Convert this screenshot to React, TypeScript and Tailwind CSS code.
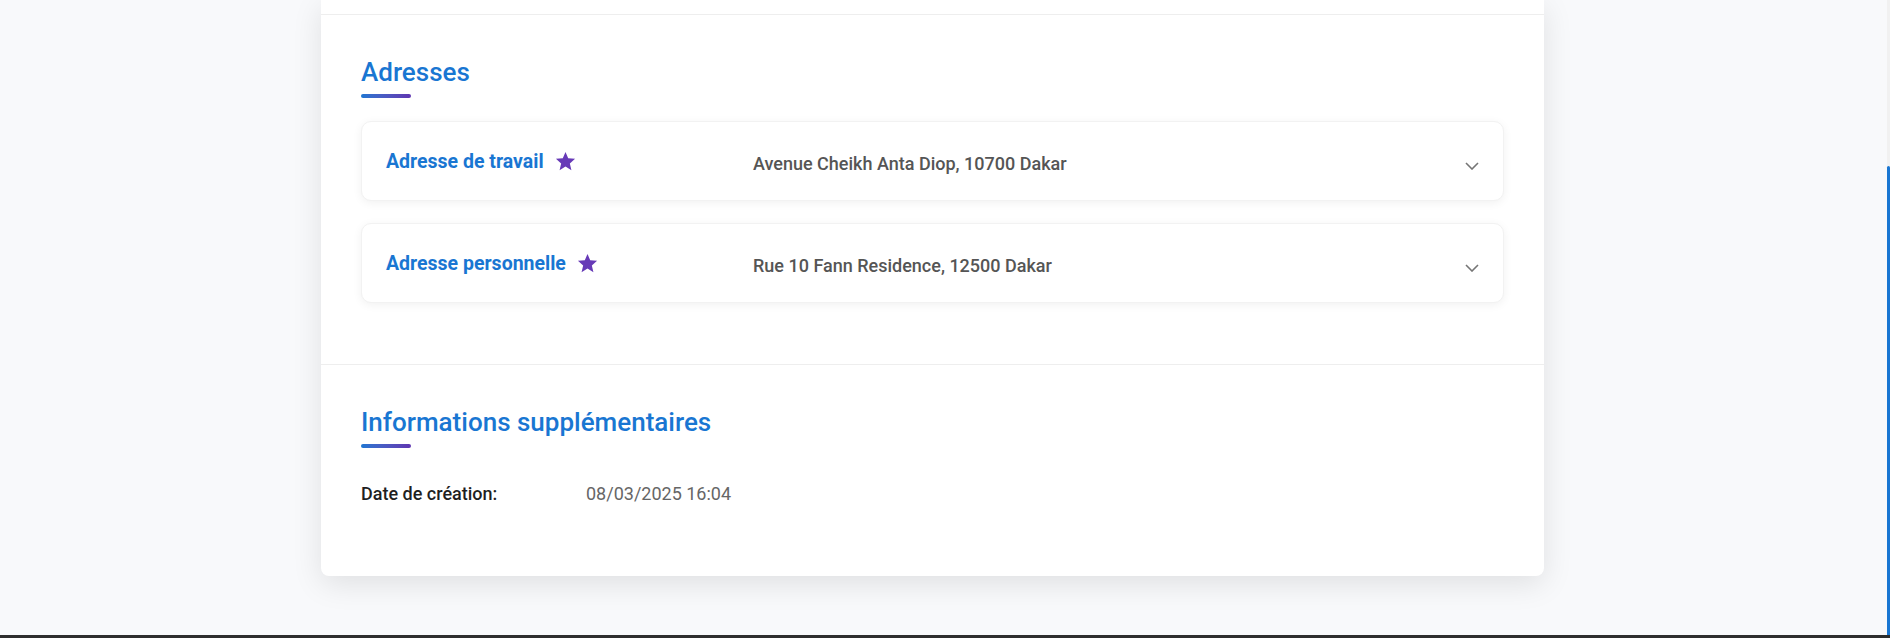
import { ReactNode } from "react";

const addresses = [
  { label: "Adresse de travail", value: "Avenue Cheikh Anta Diop, 10700 Dakar" },
  { label: "Adresse personnelle", value: "Rue 10 Fann Residence, 12500 Dakar" },
];

const StarIcon = ({ className }: { className?: string }) => (
  <svg viewBox="0 0 24 24" className={className} fill="currentColor">
    <path d="M12 17.27 18.18 21l-1.64-7.03L22 9.24l-7.19-.61L12 2 9.19 8.63 2 9.24l5.46 4.73L5.82 21z" />
  </svg>
);

const Chevron = () => (
  <svg width="14" height="8" viewBox="0 0 14 8" fill="none" className="mr-6 mt-[9px] shrink-0">
    <polyline points="1,1 7,7 13,1" stroke="#757575" strokeWidth="1.6" />
  </svg>
);

const SectionTitle = ({ children }: { children: ReactNode }) => (
  <div className="flex flex-col">
    <h2 className="text-[26px] leading-[32px] font-medium text-[#1976d2]">{children}</h2>
    {/* gradient underline */}
    <div className="mt-1.5 h-1 w-[50px] rounded-full bg-linear-to-r from-[#1976d2] to-[#5e35b1]" />
  </div>
);

const AddressCard = ({ label, value }: { label: string; value: string }) => (
  <div className="flex h-20 items-center rounded-[10px] border border-[#f2f2f2] bg-white pl-6 shadow-[0_2px_10px_rgba(0,0,0,0.06)]">
    <div className="flex w-[367px] shrink-0 items-center">
      <span className="text-[19.5px] leading-[27px] font-bold text-[#1976d2]">{label}</span>
      <StarIcon className="ml-2.5 h-[23px] w-[23px] text-[#673ab7]" />
    </div>
    <span className="mt-1 flex-1 text-[18px] leading-[27px] font-medium text-[#555]">{value}</span>
    <Chevron />
  </div>
);

export default function App() {
  return (
    <div className="flex h-[638px] w-full flex-col overflow-hidden bg-[#f8f9fb] font-['Roboto',sans-serif]">
      <div className="flex flex-1">
        <div className="flex-1">
          <div className="ml-[321px] w-[1223px] rounded-b-lg bg-white shadow-[0_8px_30px_rgba(0,0,0,0.1)]">
            {/* tail of previous section */}
            <div className="h-[15px] border-b border-[#eeeeee]" />

            {/* Adresses */}
            <section className="border-b border-[#eeeeee] px-10 pt-[41px] pb-[61px]">
              <SectionTitle>Adresses</SectionTitle>
              <div className="mt-[23px] flex flex-col gap-[22px]">
                {addresses.map((a) => (
                  <AddressCard key={a.label} label={a.label} value={a.value} />
                ))}
              </div>
            </section>

            {/* Informations supplementaires */}
            <section className="px-10 pt-[41px] pb-[69px]">
              <SectionTitle>Informations supplémentaires</SectionTitle>
              <div className="mt-8 flex items-center text-[18px] leading-[27px]">
                <span className="w-[225px] font-medium text-[#1f1f1f]">Date de création:</span>
                <span className="text-[#666]">08/03/2025 16:04</span>
              </div>
            </section>
          </div>
        </div>

        {/* scrollbar */}
        <div className="flex w-[3px] flex-col bg-[#f1f1f1]">
          <div className="h-[166px]" />
          <div className="flex-1 rounded-t-sm bg-[#1976d2]" />
        </div>
      </div>
      <div className="h-[3px] bg-[#2e2e2e]" />
    </div>
  );
}
